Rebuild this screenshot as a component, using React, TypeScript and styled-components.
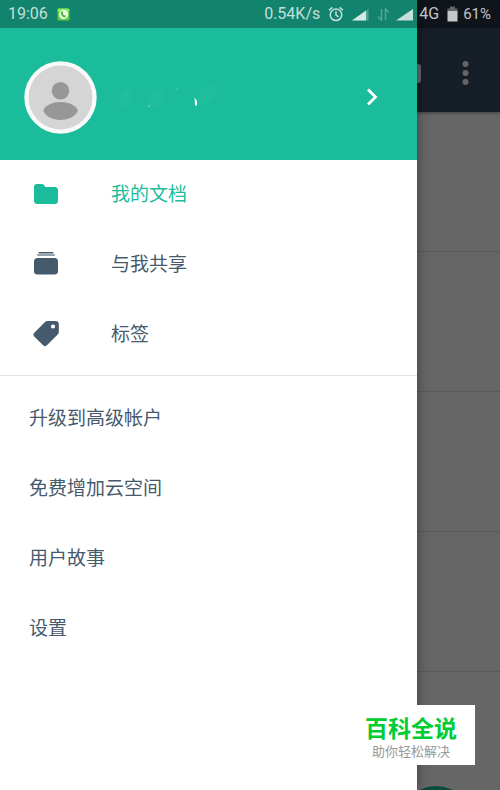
import React from "react";
import styled, { createGlobalStyle } from "styled-components";

const GlobalStyle = createGlobalStyle`
  * { box-sizing: border-box; }
  html, body { margin: 0; }
  body {
    background: #fff;
    font-family: Roboto, "Noto Sans CJK SC", sans-serif;
  }
  ul { list-style: none; margin: 0; padding: 0; }
  button { border: 0; background: none; padding: 0; font: inherit; color: inherit; cursor: pointer; }
  svg { display: block; flex: none; }
`;

const Screen = styled.div`
  position: relative;
  min-height: 100vh;
  overflow: hidden;
`;

const StatusBar = styled.header`
  position: absolute;
  inset: 0 0 auto 0;
  z-index: 3;
  height: 28px;
  padding: 0 9px 0 8px;
  display: flex;
  align-items: center;
  justify-content: space-between;
  background: rgba(0, 0, 0, 0.3);
  color: rgba(255, 255, 255, 0.76);
  font-size: 16px;
  line-height: 28px;
`;

const StatusGroup = styled.div<{ $gap: number }>`
  display: flex;
  align-items: center;
  gap: ${(p) => p.$gap}px;
`;

const Battery = styled.span`
  font-size: 15px;
`;

const DocumentsPage = styled.main`
  position: absolute;
  inset: 0;
  overflow: hidden;
  background: #fff;
`;

const Toolbar = styled.div`
  height: 112px;
  padding: 28px 22px 0 0;
  display: flex;
  align-items: center;
  justify-content: flex-end;
  gap: 33px;
  background: #394b61;
  color: #fff;
  box-shadow: 0 1px 3px rgba(0, 0, 0, 0.4);
`;

const ToolButton = styled.button`
  display: flex;
  align-items: center;
  padding-top: 6px;
`;

const DocumentRow = styled.li`
  height: 140px;
  border-bottom: 1px solid #e4e4e4;
`;

const AddButton = styled.button`
  position: absolute;
  right: 26px;
  bottom: -72px;
  width: 76px;
  height: 76px;
  border-radius: 50%;
  background: #1bbc9c;
`;

const Scrim = styled.div`
  position: absolute;
  inset: 0;
  z-index: 1;
  background: rgba(0, 0, 0, 0.6);
`;

const Drawer = styled.aside`
  position: relative;
  z-index: 2;
  width: 83.4%;
  min-height: 100vh;
  background: #fff;
  box-shadow: 0 0 12px rgba(0, 0, 0, 0.4);
`;

const Profile = styled.button`
  width: 100%;
  height: 160px;
  padding: 34px 37px 0 24px;
  display: flex;
  align-items: center;
  background: #1bbc9c;
  color: #fff;
`;

const NameArea = styled.span`
  flex: 1;
  padding-left: 19px;
`;

const Menu = styled.ul<{ $top: number; $bottom: number }>`
  padding: ${(p) => p.$top}px 0 ${(p) => p.$bottom}px;
`;

const Divider = styled.hr`
  height: 1px;
  margin: 0;
  border: 0;
  background: #e2e2e2;
`;

const MenuLink = styled.a<{ $active?: boolean }>`
  height: 70px;
  padding: 0 29px;
  display: flex;
  align-items: center;
  color: ${(p) => (p.$active ? "#1bbc9c" : "#465a6e")};
  font-size: 19px;
  line-height: 28px;
  text-decoration: none;
`;

const IconSlot = styled.span`
  width: 82px;
  padding-left: 3px;
`;

const Watermark = styled.div`
  position: absolute;
  right: 25px;
  bottom: 25px;
  z-index: 4;
  padding: 11px 18px 5px;
  background: #fff;
  text-align: center;
`;

const WatermarkTitle = styled.div`
  color: #0c3;
  font-size: 23px;
  font-weight: 700;
  line-height: 28px;
`;

const WatermarkText = styled.div`
  color: #999;
  font-size: 13px;
  line-height: 16px;
`;

const FolderIcon = () => (
  <svg width="28" height="28" viewBox="0 0 28 28" fill="currentColor" aria-hidden="true">
    <path d="M2 6Q2 3 5 3H10Q12.500 3 13 5.500V6H22.500Q26 6 26 9.500V19.500Q26 23 22.500 23H5.500Q2 23 2 19.500Z" />
  </svg>
);

const SharedIcon = () => (
  <svg width="28" height="28" viewBox="0 0 28 28" fill="currentColor" aria-hidden="true">
    <rect x="6.500" y="1" width="15" height="1.500" rx=".7" />
    <rect x="5" y="3.200" width="18" height="1.600" rx=".8" opacity=".75" />
    <rect x="2" y="7" width="24" height="16.500" rx="3.500" />
  </svg>
);

const TagIcon = () => (
  <svg width="28" height="28" viewBox="0 1.500 28 28" fill="currentColor" aria-hidden="true">
    <path
      fillRule="evenodd"
      d="M15.200 1.500H23.500Q26.800 1.500 26.800 4.800V12.500Q26.800 14 25.700 15.100L14.600 26Q13 27.300 11.400 26L2 16.800Q.7 15.300 2 13.600L13 2.500Q14 1.500 15.200 1.500ZM21 4.900a2.100 2.100 0 1 0 0 4.200a2.100 2.100 0 1 0 0-4.200Z"
    />
  </svg>
);

const Avatar = () => (
  <svg width="73" height="73" viewBox="0 0 73 73" aria-hidden="true">
    <circle cx="36.500" cy="36.500" r="36.200" fill="#fafafa" />
    <circle cx="36.500" cy="36.500" r="32" fill="#d5d5d5" />
    <circle cx="36.500" cy="29.700" r="8.800" fill="#979797" />
    <path d="M19.300 49.500C21.500 44 28.500 41 36.500 41S51.500 44 54 49.500C51.500 55.500 44.500 59 36.500 59S21.500 55.500 19.300 49.500Z" fill="#979797" />
  </svg>
);

const NameSmudge = () => (
  <svg width="104" height="30" viewBox="0 0 104 30" aria-hidden="true">
    <g fill="#fff" opacity=".02">
      <ellipse cx="10" cy="16" rx="6" ry="10" transform="rotate(20 10 16)" />
      <ellipse cx="40" cy="16" rx="7" ry="10" transform="rotate(35 40 16)" />
      <ellipse cx="91" cy="13" rx="7" ry="12" transform="rotate(40 91 13)" />
    </g>
    <circle cx="33" cy="24" r="1" fill="#fff" opacity=".35" />
    <circle cx="61" cy="7" r="1" fill="#fff" opacity=".15" />
    <path d="M78.500 15.500L81 19V23.500H79Z" fill="#fff" />
  </svg>
);

const Chevron = () => (
  <svg width="16" height="20" viewBox="0 0 16 20" fill="none" stroke="currentColor" strokeWidth="2.800" aria-hidden="true">
    <path d="M4 2.500L11.500 10L4 17.500" />
  </svg>
);

const CallIcon = () => (
  <svg width="13" height="13" viewBox="0 0 13 13" aria-hidden="true">
    <rect x=".5" y=".5" width="12" height="12" rx="1.500" fill="#62cb47" />
    <rect x=".5" y=".5" width="12" height="3" rx="1.500" fill="#83ed5b" />
    <circle cx="6.600" cy="6.500" r="4.700" fill="#e9fbdc" />
    <path d="M3.700 4.300Q5 2.700 6.300 3.800L5.800 5.300Q6 6.800 7.500 7.500L9 7.300Q9.400 8.800 7.700 9.400Q4.200 9 3.700 4.300Z" fill="#46b941" />
  </svg>
);

const AlarmIcon = () => (
  <svg width="16" height="16" viewBox="0 0 16 16" fill="none" stroke="currentColor" strokeWidth="1.500" aria-hidden="true">
    <circle cx="8" cy="8.800" r="5.800" />
    <path d="M8 5.200V9l2.600 1.800M1 4.300L4.300 1.400M15 4.300L11.700 1.400" />
  </svg>
);

const WeakSignal = () => (
  <svg width="17" height="13" viewBox="0 0 17 13" fill="currentColor" aria-hidden="true">
    <path d="M0 12.500L16.500 1V12.500Z" opacity=".35" />
    <path d="M0 12.500L14 2.600V12.500Z" />
  </svg>
);

const DataArrows = () => (
  <svg width="13" height="13" viewBox="0 0 13 13" fill="none" stroke="currentColor" strokeWidth="1.500" opacity=".38" aria-hidden="true">
    <path d="M4.500 1V12L1 8.500M8.500 12V1L12 4.500" />
  </svg>
);

const FullSignal = () => (
  <svg width="17" height="13" viewBox="0 0 17 13" fill="currentColor" aria-hidden="true">
    <path d="M0 12.500L17 1V12.500Z" />
  </svg>
);

const BatteryIcon = () => (
  <svg width="11" height="16" viewBox="0 0 11 16" fill="currentColor" aria-hidden="true">
    <path d="M3 .5H8V2.500H10.500V5H.5V2.500H3Z" opacity=".45" />
    <rect x=".5" y="5" width="10" height="10.500" />
  </svg>
);

const libraryItems = [
  { label: "我的文档", Icon: FolderIcon, active: true },
  { label: "与我共享", Icon: SharedIcon, active: false },
  { label: "标签", Icon: TagIcon, active: false },
];

const accountItems = ["升级到高级帐户", "免费增加云空间", "用户故事", "设置"];

export default function App() {
  return (
    <>
      <GlobalStyle />
      <Screen>
        <StatusBar>
          <StatusGroup $gap={9}>
            <span>19:06</span>
            <CallIcon />
          </StatusGroup>
          <StatusGroup $gap={8}>
            <StatusGroup $gap={8}>
              <span>0.54K/s</span>
              <AlarmIcon />
              <WeakSignal />
            </StatusGroup>
            <StatusGroup $gap={6}>
              <DataArrows />
              <FullSignal />
              <span>4G</span>
            </StatusGroup>
            <StatusGroup $gap={5}>
              <BatteryIcon />
              <Battery>61%</Battery>
            </StatusGroup>
          </StatusGroup>
        </StatusBar>

        <DocumentsPage>
          <Toolbar>
            <ToolButton aria-label="新建文件夹">
              <svg width="24" height="20" viewBox="0 0 24 20" fill="currentColor">
                <path d="M0 3Q0 0 3 0H10L12 1H21Q24 1 24 4V17Q24 20 21 20H3Q0 20 0 17Z" />
              </svg>
            </ToolButton>
            <ToolButton aria-label="更多">
              <svg width="24" height="26" viewBox="0 0 24 26" fill="currentColor">
                <circle cx="11.500" cy="4" r="3" />
                <circle cx="11.500" cy="13" r="3" />
                <circle cx="11.500" cy="22" r="3" />
              </svg>
            </ToolButton>
          </Toolbar>
          <ul>
            {[1, 2, 3, 4, 5].map((row) => (
              <DocumentRow key={row} />
            ))}
          </ul>
          <AddButton aria-label="新建" />
        </DocumentsPage>
        <Scrim />

        <Drawer>
          <Profile aria-label="个人资料">
            <Avatar />
            <NameArea>
              <NameSmudge />
            </NameArea>
            <Chevron />
          </Profile>
          <nav>
            <Menu $top={0} $bottom={5}>
              {libraryItems.map(({ label, Icon, active }) => (
                <li key={label}>
                  <MenuLink href="#" $active={active}>
                    <IconSlot>
                      <Icon />
                    </IconSlot>
                    {label}
                  </MenuLink>
                </li>
              ))}
            </Menu>
            <Divider />
            <Menu $top={8} $bottom={8}>
              {accountItems.map((label) => (
                <li key={label}>
                  <MenuLink href="#">{label}</MenuLink>
                </li>
              ))}
            </Menu>
          </nav>
        </Drawer>

        <Watermark>
          <WatermarkTitle>百科全说</WatermarkTitle>
          <WatermarkText>助你轻松解决</WatermarkText>
        </Watermark>
      </Screen>
    </>
  );
}
